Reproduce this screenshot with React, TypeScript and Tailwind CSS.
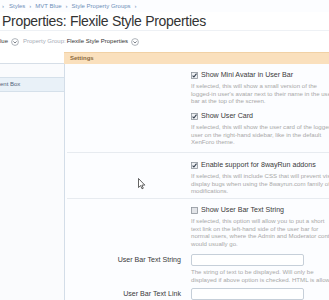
import React from "react";

function CircleArrow() {
  return (
    <svg width="8" height="8" viewBox="0 0 8 8" className="shrink-0">
      <circle cx="4" cy="4" r="3.4" fill="#fff" stroke="#9aa1aa" strokeWidth="0.8" />
      <path d="M2.4 3.4 L4 5 L5.6 3.4" fill="none" stroke="#6b727b" strokeWidth="0.9" />
    </svg>
  );
}

function Check({ checked }: { checked: boolean }) {
  return (
    <svg width="7" height="7" viewBox="0 0 7 7" className="shrink-0">
      <rect x="0.5" y="0.5" width="6" height="6" fill={checked ? "#eef0f3" : "#e2e4e8"} stroke="#8e949c" strokeWidth="0.8" />
      {checked && <path d="M1.6 3.6 L2.9 5 L5.5 1.7" fill="none" stroke="#2f3a48" strokeWidth="1.1" />}
    </svg>
  );
}

type RowProps = {
  checked: boolean;
  label: string;
  lines: string[];
  className?: string;
};

function CheckRow({ checked, label, lines, className = "" }: RowProps) {
  return (
    <div className={"grid grid-cols-[114px_1fr] gap-x-[10px] " + className}>
      <div />
      <div className="min-w-0">
        <div className="flex h-[9px] items-center gap-[3px] whitespace-nowrap text-[7.1px] leading-[9px] text-[#3b3b3b]">
          <Check checked={checked} />
          {label}
        </div>
        <div className="mt-[2px] whitespace-nowrap text-[6.1px] leading-[7.5px] text-[#a8a8a8]">
          {lines.map((l) => (
            <div key={l}>{l}</div>
          ))}
        </div>
      </div>
    </div>
  );
}

function InputRow({ label, lines, className = "" }: { label: string; lines?: string[]; className?: string }) {
  return (
    <div className={"grid grid-cols-[114px_1fr] gap-x-[10px] " + className}>
      <div className="flex h-[12px] items-center justify-end whitespace-nowrap text-[7.1px] text-[#3b3b3b]">{label}</div>
      <div className="min-w-0">
        <div className="h-[12px] w-[113px] rounded-[2px] border border-[#c6cfd9] bg-white" />
        {lines && (
          <div className="mt-[2px] whitespace-nowrap text-[6.1px] leading-[7.5px] text-[#a8a8a8]">
            {lines.map((l) => (
              <div key={l}>{l}</div>
            ))}
          </div>
        )}
      </div>
    </div>
  );
}

export default function App() {
  return (
    <div className="relative h-[300px] w-[329px] overflow-hidden bg-[#fcfdff] font-['Liberation_Sans',Arial,sans-serif]">
      <div className="flex h-[12px] items-center whitespace-nowrap pl-[2px] text-[6px] leading-[12px] text-[#6f8fb9]">
        <span>›</span>
        <span className="ml-[5px]">Styles</span>
        <span className="mx-[4px]">›</span>
        <span>MVT Blue</span>
        <span className="mx-[4px]">›</span>
        <span>Style Property Groups</span>
        <span className="ml-[4px]">›</span>
      </div>
      <div className="h-[19px] border-b border-[#eef1f5] bg-white pl-[2px] text-[14px] leading-[18px] tracking-[-0.3px] whitespace-nowrap text-[#333]">
        Properties: Flexile Style Properties
      </div>
      <div className="flex h-[21px] items-center whitespace-nowrap bg-white text-[6px]">
        <span className="text-[#3a3a3a]">lue</span>
        <span className="ml-[3px]"><CircleArrow /></span>
        <span className="ml-[4px] text-[#a6adb8]">Property Group:</span>
        <span className="ml-[1px] text-[#333]">Flexile Style Properties</span>
        <span className="ml-[3px]"><CircleArrow /></span>
      </div>
      <div className="flex h-[12px]">
        <div className="w-[64px] shrink-0 border-b border-[#d6dee7] bg-white" />
        <div className="flex min-w-0 flex-1 items-center border-t border-[#f1d1a5] bg-[#fae0bd] pl-[6px] text-[6px] font-semibold text-[#8b6a3e]">
          Settings
        </div>
      </div>
      <div className="flex h-[236px]">
        <div className="w-[65px] shrink-0 border-r border-[#d3dde8] bg-[#fafbfd] pt-[13px]">
          <div className="flex h-[15px] items-center border-y border-[#d5e0ea] bg-[#e9f1f8] whitespace-nowrap text-[6px] text-[#51637a]">
            ent Box
          </div>
        </div>
        <div className="min-w-0 flex-1 overflow-hidden pl-[2px]">
          <CheckRow
            className="mt-[7px]"
            checked
            label="Show Mini Avatar in User Bar"
            lines={[
              "If selected, this will show a small version of the",
              "logged-in user's avatar next to their name in the user",
              "bar at the top of the screen.",
            ]}
          />
          <CheckRow
            className="mt-[7.5px]"
            checked
            label="Show User Card"
            lines={[
              "If selected, this will show the user card of the logged-in",
              "user on the right-hand sidebar, like in the default",
              "XenForo theme.",
            ]}
          />
          <div className="mt-[6.5px] border-y border-[#e7ebf0] pb-[3.5px] pt-[8px]">
            <CheckRow
              checked
              label="Enable support for 8wayRun addons"
              lines={[
                "If selected, this will include CSS that will prevent visual",
                "display bugs when using the 8wayrun.com family of",
                "modifications.",
              ]}
            />
          </div>
          <CheckRow
            className="mt-[7px]"
            checked={false}
            label="Show User Bar Text String"
            lines={[
              "If selected, this option will allow you to put a short",
              "text link on the left-hand side of the user bar for",
              "normal users, where the Admin and Moderator control",
              "would usually go.",
            ]}
          />
          <InputRow
            className="mt-[7px]"
            label="User Bar Text String"
            lines={[
              "The string of text to be displayed. Will only be",
              "displayed if above option is checked. HTML is allowed.",
            ]}
          />
          <InputRow className="mt-[5px]" label="User Bar Text Link" />
        </div>
      </div>
      <svg width="8" height="12" viewBox="0 0 8 12" className="absolute left-[138px] top-[178px]">
        <path d="M0.5 0.5 L0.5 9.5 L2.6 7.6 L4 10.8 L5.3 10.2 L3.9 7.1 L6.8 7.1 Z" fill="#fff" stroke="#222" strokeWidth="0.7" />
      </svg>
    </div>
  );
}
